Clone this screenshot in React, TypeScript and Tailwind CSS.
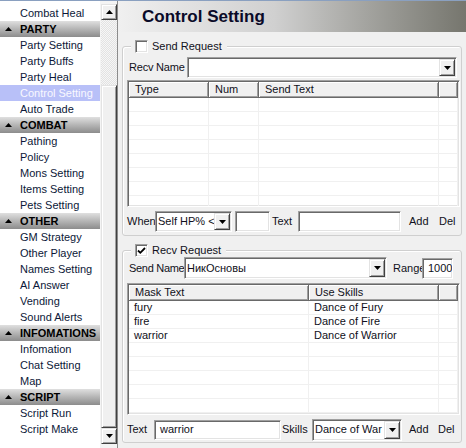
import React from "react";

const sunken =
  "border border-t-[#a0a0a0] border-l-[#a0a0a0] border-r-[#ffffff] border-b-[#ffffff] shadow-[inset_1px_1px_0_#696969,inset_-1px_-1px_0_#e3e3e3]";
const raised =
  "border border-t-[#e3e3e3] border-l-[#e3e3e3] border-r-[#404040] border-b-[#404040] shadow-[inset_1px_1px_0_#ffffff,inset_-1px_-1px_0_#a0a0a0] bg-[#f0f0f0]";

function Tri({ up = false }: { up?: boolean }) {
  return (
    <svg width="7" height="4" viewBox="0 0 7 4">
      <path d={up ? "M0 4h7L3.5 0z" : "M0 0h7L3.5 4z"} fill="#000" />
    </svg>
  );
}

type Item = [string, string];
const items: Item[] = [
  ["i", "Combat Heal"],
  ["h", "PARTY"],
  ["i", "Party Setting"],
  ["i", "Party Buffs"],
  ["i", "Party Heal"],
  ["s", "Control Setting"],
  ["i", "Auto Trade"],
  ["h", "COMBAT"],
  ["i", "Pathing"],
  ["i", "Policy"],
  ["i", "Mons Setting"],
  ["i", "Items Setting"],
  ["i", "Pets Setting"],
  ["h", "OTHER"],
  ["i", "GM Strategy"],
  ["i", "Other Player"],
  ["i", "Names Setting"],
  ["i", "AI Answer"],
  ["i", "Vending"],
  ["i", "Sound Alerts"],
  ["h", "INFOMATIONS"],
  ["i", "Infomation"],
  ["i", "Chat Setting"],
  ["i", "Map"],
  ["h", "SCRIPT"],
  ["i", "Script Run"],
  ["i", "Script Make"],
];

function Sidebar() {
  return (
    <div className="w-[100px] bg-white pt-[4px] flex flex-col overflow-hidden">
      {items.map(([t, label], i) => {
        if (t === "h")
          return (
            <div
              key={i}
              className="h-[16px] shrink-0 flex items-center bg-linear-to-b from-[#e0e0e0] to-[#8c8c8c] text-[11px] font-bold text-black whitespace-nowrap"
            >
              <span className="w-[20px] flex justify-center pr-[3px]">
                <Tri up />
              </span>
              {label}
            </div>
          );
        if (t === "s")
          return (
            <div
              key={i}
              className="h-[16px] shrink-0 flex items-center pl-[20px] bg-[#b8c0f8] text-[11px] text-[#f8f8ff] whitespace-nowrap"
            >
              {label}
            </div>
          );
        return (
          <div
            key={i}
            className="h-[16px] shrink-0 flex items-center pl-[20px] text-[11px] text-[#0c1838] whitespace-nowrap"
          >
            {label}
          </div>
        );
      })}
    </div>
  );
}

function Scrollbar() {
  return (
    <div className="w-[17px] pl-[1px] pt-[3px] flex flex-col bg-[#f4f4f4]">
      <div className={`w-[16px] h-[16px] shrink-0 flex items-center justify-center ${raised}`}>
        <Tri up />
      </div>
      <div className="w-[16px] h-[65px] shrink-0 bg-[repeating-conic-gradient(#f6f6f6_0_25%,#e2e2e2_0_50%)] bg-[length:2px_2px]" />
      <div className={`w-[16px] h-[343px] shrink-0 ${raised}`} />
      <div className={`w-[16px] h-[16px] shrink-0 flex items-center justify-center ${raised}`}>
        <Tri />
      </div>
    </div>
  );
}

function Combo({ w, h = 21, text }: { w: number; h?: number; text: string }) {
  return (
    <div
      className={`flex bg-white p-[1px] shrink-0 ${sunken}`}
      style={{ width: w, height: h }}
    >
      <div className="flex-1 min-w-0 overflow-hidden whitespace-nowrap pl-[1px] text-[11px] leading-none flex items-center text-[#101020]">
        {text}
      </div>
      <div className={`w-[16px] h-full shrink-0 flex items-center justify-center ${raised}`}>
        <Tri />
      </div>
    </div>
  );
}

function Edit({ w, h = 20, text = "" }: { w: number; h?: number; text?: string }) {
  return (
    <div
      className={`bg-white shrink-0 flex items-center pl-[5px] text-[11px] text-[#101020] overflow-hidden whitespace-nowrap ${sunken}`}
      style={{ width: w, height: h }}
    >
      {text}
    </div>
  );
}

function Check({ checked }: { checked: boolean }) {
  return (
    <div className={`w-[13px] h-[13px] bg-white shrink-0 flex items-center justify-center ${sunken}`}>
      {checked && (
        <svg width="9" height="9" viewBox="0 0 9 9">
          <path d="M1 4.5l2.3 2.3L8 2" stroke="#000" strokeWidth="1.8" fill="none" />
        </svg>
      )}
    </div>
  );
}

type Col = { label: string; w?: number };

function ListView({
  cols,
  rows,
  h,
  n,
}: {
  cols: Col[];
  rows: string[][];
  h: number;
  n: number;
}) {
  const all = Array.from({ length: n }, (_, i) => rows[i] || []);
  return (
    <div className={`bg-white p-[1px] shrink-0 overflow-hidden flex flex-col ${sunken}`} style={{ height: h }}>
      <div className="flex h-[16px] shrink-0">
        {cols.map((c, i) => (
          <div
            key={i}
            className={`h-full bg-[#f0f0f0] border-r border-b border-r-[#696969] border-b-[#696969] shadow-[inset_1px_1px_0_#ffffff,inset_-1px_-1px_0_#a0a0a0] pl-[6px] text-[11px] leading-none flex items-center text-[#101020] whitespace-nowrap ${
              c.w ? "shrink-0" : "flex-1"
            }`}
            style={c.w ? { width: c.w } : undefined}
          >
            {c.label}
          </div>
        ))}
      </div>
      {all.map((r, ri) => (
        <div key={ri} className="flex h-[14px] shrink-0 border-b border-[#f0f0f0]">
          {cols.map((c, ci) => (
            <div
              key={ci}
              className={`h-full border-r border-[#f0f0f0] pl-[5px] text-[11px] leading-[13px] text-[#101020] whitespace-nowrap overflow-hidden ${
                c.w ? "shrink-0" : "flex-1"
              }`}
              style={c.w ? { width: c.w } : undefined}
            >
              {r[ci] || ""}
            </div>
          ))}
        </div>
      ))}
    </div>
  );
}

function Legend({ checked, label }: { checked: boolean; label: string }) {
  return (
    <div className="-mt-[7px] ml-[4px] h-[13px] w-fit flex items-center gap-[4px] bg-[#f0f0f0] pl-[4px] pr-[5px] text-[11px] text-[#101020] whitespace-nowrap">
      <Check checked={checked} />
      <span>{label}</span>
    </div>
  );
}

export default function App() {
  return (
    <div className="w-[466px] h-[448px] flex flex-col overflow-hidden bg-[#f0f0f0] font-['Liberation_Sans',Arial,sans-serif] text-[#101020]">
      <div className="h-px shrink-0 bg-[#8aa0c0]" />
      <div className="flex flex-1 min-h-0">
        <Sidebar />
        <Scrollbar />
        <div className="w-px bg-[#8c8c8c]" />
        <div className="w-[348px] flex flex-col">
          <div className="h-[31px] shrink-0 flex items-center pl-[24px] bg-linear-to-r from-[#f0f0f0] via-[#d0d0d0] via-45% to-[#76766e] text-[17px] font-bold text-[#0a0a28]">
            Control Setting
          </div>

          <div className="mx-[4px] mt-[14px] h-[190px] shrink-0 rounded-[3px] border border-[#cfcfcf] shadow-[inset_1px_1px_0_#ffffff] flex flex-col pl-[4px] pr-[1px]">
            <Legend checked={false} label="Send Request" />
            <div className="mt-[4px] h-[21px] flex items-center">
              <span className="ml-[2px] text-[11px] whitespace-nowrap tracking-[-0.2px]">Recv Name</span>
              <div className="ml-auto mr-[3px]">
                <Combo w={270} text="" />
              </div>
            </div>
            <div className="mt-[2px]">
              <ListView
                h={127}
                n={8}
                cols={[
                  { label: "Type", w: 80 },
                  { label: "Num", w: 50 },
                  { label: "Send Text", w: 180 },
                  { label: "" },
                ]}
                rows={[]}
              />
            </div>
            <div className="mt-[4px] h-[21px] flex items-center text-[11px]">
              <span className="w-[28px] shrink-0">When</span>
              <Combo w={77} text="Self HP% <" />
              <div className="ml-[3px]">
                <Edit w={35} h={21} />
              </div>
              <span className="ml-[2px] w-[26px] shrink-0">Text</span>
              <Edit w={103} h={21} />
              <span className="ml-[8px] w-[30px] shrink-0">Add</span>
              <span>Del</span>
            </div>
          </div>

          <div className="mx-[4px] mt-[14px] h-[193px] shrink-0 rounded-[3px] border border-[#cfcfcf] shadow-[inset_1px_1px_0_#ffffff] flex flex-col pl-[4px] pr-[1px]">
            <Legend checked={true} label="Recv Request" />
            <div className="mt-0 h-[22px] flex items-center text-[11px]">
              <span className="ml-[2px] w-[55px] shrink-0 whitespace-nowrap tracking-[-0.3px]">Send Name</span>
              <Combo w={203} h={22} text="НикОсновы" />
              <div className="ml-[3px] w-[32px] shrink-0 whitespace-nowrap pl-[3px]">Range</div>
              <Edit w={31} h={21} text="1000" />
            </div>
            <div className="mt-[4px]">
              <ListView
                h={132}
                n={8}
                cols={[
                  { label: "Mask Text", w: 180 },
                  { label: "Use Skills", w: 130 },
                  { label: "" },
                ]}
                rows={[
                  ["fury", "Dance of Fury"],
                  ["fire", "Dance of Fire"],
                  ["warrior", "Dance of Warrior"],
                ]}
              />
            </div>
            <div className="mt-[3px] h-[23px] flex items-center text-[11px]">
              <span className="w-[27px] shrink-0">Text</span>
              <Edit w={127} h={20} text="warrior" />
              <span className="ml-[1px] w-[30px] shrink-0">Skills</span>
              <Combo w={90} h={22} text="Dance of War" />
              <span className="ml-[7px] w-[29px] shrink-0">Add</span>
              <span>Del</span>
            </div>
          </div>
        </div>
      </div>
    </div>
  );
}
